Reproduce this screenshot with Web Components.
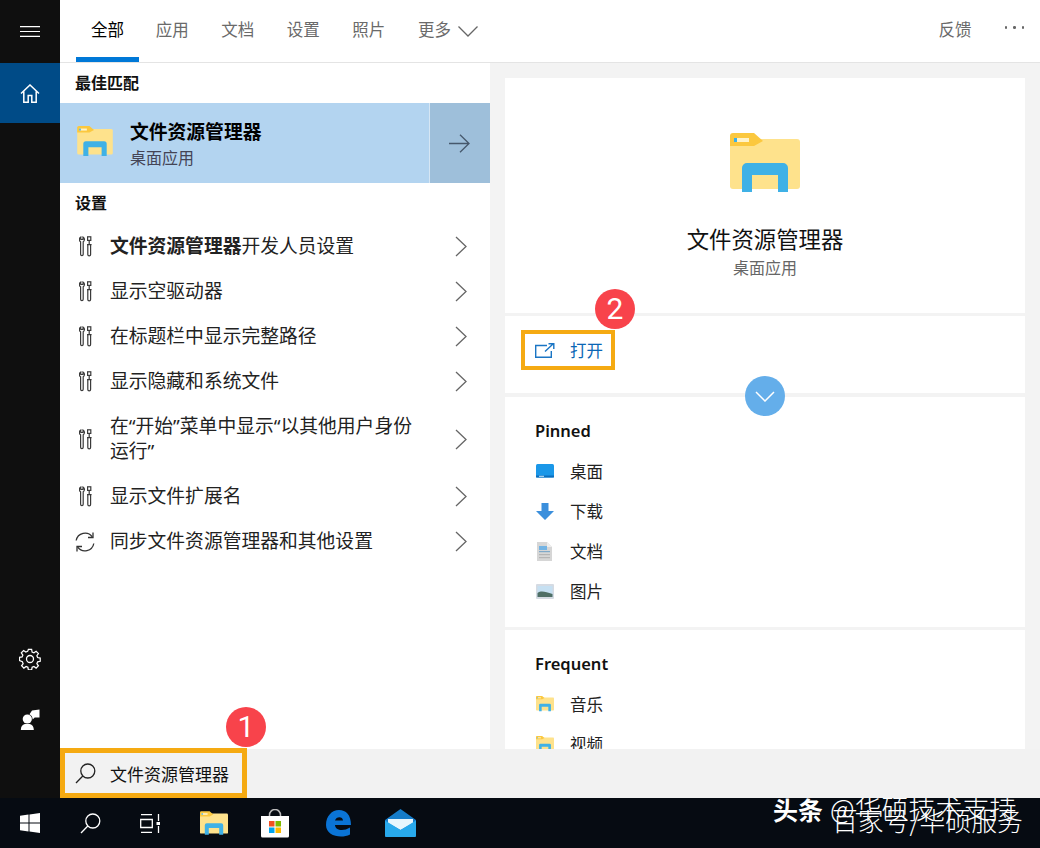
<!DOCTYPE html>
<html lang="zh">
<head>
<meta charset="utf-8">
<title>Search</title>
<style>
  html, body { margin: 0; height: 100%; overflow: hidden; background: #f3f3f3; }
  body { font-family: "Noto Sans", "Noto Sans CJK SC", sans-serif; }
</style>
</head>
<body>
<search-app></search-app>

<script>
// icon strings, shared by the elements below
const folder = (w, h) => `<svg width="${w}" height="${h}" viewBox="0 0 70 59" style="display:block">
  <rect x="0" y="6" width="70" height="50" rx="3" fill="#fee28c"/>
  <path d="M0 3a3 3 0 0 1 3-3h21l9 8-9 5H0z" fill="#fbc83f"/>
  <rect x="4" y="5" width="15" height="4" fill="#fff3c9"/><rect x="4" y="5" width="3" height="4" fill="#3cb0e8"/>
  <path d="M12 59V35a5 5 0 0 1 5-5h36a5 5 0 0 1 5 5v24H48V42H22v17z" fill="#3fb1e6"/>
</svg>`;

const wrench = `<svg width="13" height="21" viewBox="0 0 13 21" fill="none" stroke="#3a3a3a" stroke-width="1.200">
  <path d="M1.800 1v2.500h2.200V1c1 .5 1.600 1.500 1.400 2.800-.1.900-.6 1.600-1.200 2v12.500a1.300 1.300 0 0 1-2.600 0V5.800C1 5.400.5 4.700.4 3.800.3 2.600.8 1.500 1.800 1z"/>
  <rect x="8.600" y=".8" width="3.200" height="3.600"/>
  <path d="M10.200 4.400v4.200M8 8.600h4.600M8.800 8.600v9.900a1.400 1.400 0 0 0 2.800 0V8.600"/>
</svg>`;

const sync = `<svg width="22" height="22" viewBox="0 0 22 22" fill="none" stroke="#333" stroke-width="1.300">
  <path d="M2.200 9.500A9 9 0 0 1 18.300 5.800M19.800 12.500A9 9 0 0 1 3.700 16.200"/>
  <path d="M19 1.500v5h-5M3 20.500v-5h5"/>
</svg>`;

const chevronRight = `<svg width="12" height="21" viewBox="0 0 12 21" fill="none" stroke="#666" stroke-width="1.300"><path d="M1 1 11 10.500 1 20"/></svg>`;

const pinnedIcons = {
  desktop: `<svg width="18" height="15" viewBox="0 0 18 15"><rect width="18" height="13.500" rx="1.500" fill="#1a97e8"/><rect y="11.500" width="18" height="2" fill="#0c6fbd"/><rect x="3" y="11.800" width="5" height="1" fill="#cde7f8"/></svg>`,
  download: `<svg width="18" height="17" viewBox="0 0 18 17"><path d="M5.500 0h7v8H18l-9 9-9-9h5.500z" fill="#3b8fdc"/></svg>`,
  doc: `<svg width="17" height="19" viewBox="0 0 17 19"><path d="M1 0h10l5 5v14H1z" fill="#d6d6d6"/><path d="M11 0l5 5h-5z" fill="#eee"/><rect x="3" y="4" width="8" height="4" fill="#74b4e4"/><rect x="3" y="9" width="11" height="1.200" fill="#7fa9c9"/><rect x="3" y="12" width="11" height="1.200" fill="#b5b5b5"/><rect x="3" y="15" width="11" height="1.200" fill="#b5b5b5"/></svg>`,
  pictures: `<svg width="18" height="15" viewBox="0 0 18 15"><rect width="18" height="15" rx="1" fill="#d5dbe3"/><rect x="1.500" y="2" width="15" height="11" fill="#c6e0f2"/><path d="M1.500 9c4-3 8-1 15 1v3h-15z" fill="#4f6f66"/></svg>`,
  folder: folder(18, 15.200)
};

class SearchRail extends HTMLElement {
  constructor() {
    super();
    this.attachShadow({ mode: 'open' });
    this.shadowRoot.innerHTML = `
      <style>
        :host { display: flex; flex-direction: column; width: 60px; background: #0f0f0f; }
        .item { height: 60px; display: flex; align-items: center; justify-content: center; }
        .burger { height: 63px; }
        .home { background: #004b87; }
        .spacer { flex: 1; }
        .end { height: 49px; }
        svg { display: block; }
      </style>
      <div class="item burger"><svg width="20" height="11" viewBox="0 0 20 11" stroke="#fff" stroke-width="1.100"><path d="M0 .6h20M0 5.500h20M0 10.400h20"/></svg></div>
      <div class="item home"><svg width="20" height="19" viewBox="0 0 20 19" fill="none" stroke="#fff" stroke-width="1.500"><path d="M1 9.500 10 1l9 8.500M3.800 7.500v10.700h4.400v-6.700h3.600v6.700h4.400V7.500"/></svg></div>
      <div class="spacer"></div>
      <div class="item"><svg width="22" height="22" viewBox="0 0 22 22" fill="none" stroke="#fff" stroke-width="1.300"><circle cx="11" cy="11" r="3.500"/><path d="M9.300 1h3.400l.5 2.700 1.900.8 2.300-1.600 2.400 2.400-1.600 2.300.8 1.900 2.700.5v3.400l-2.700.5-.8 1.900 1.600 2.300-2.400 2.400-2.300-1.600-1.900.8-.5 2.700H9.300l-.5-2.700-1.900-.8-2.300 1.600-2.400-2.400 1.600-2.300-.8-1.900L0 12.700V9.300l2.700-.5.8-1.900-1.600-2.300 2.400-2.400 2.300 1.600 1.900-.8z" transform="translate(.5 .5) scale(.955)"/></svg></div>
      <div class="item"><svg width="20" height="21" viewBox="0 0 20 21" fill="#fff"><circle cx="7.300" cy="10" r="4.600"/><path d="M.8 21c0-3.500 1.500-5.500 4-6h5c2.500.5 4 2.500 4 6z"/><path d="M12 1.500 19.500.5v8h-4.800l-2 2c-.2-2.500-1.200-4-3.200-5.200z"/></svg></div>
      <div class="end"></div>`;
  }
}

class SearchTabs extends HTMLElement {
  constructor() {
    super();
    this.attachShadow({ mode: 'open' });
    this.shadowRoot.innerHTML = `
      <style>
        :host { display: flex; align-items: stretch; height: 63px; box-sizing: border-box; background: #fff; border-bottom: 1px solid #e4e4e4; padding-left: 16px; font-size: 16.500px; color: #6a6a6a; }
        .tab { box-sizing: border-box; height: 62px; width: 65.500px; padding-top: 18px; line-height: 24px; text-align: center; flex: none; }
        .tab.on { color: #000; width: 63px; margin-right: .5px; border-bottom: 5px solid #0078d7; }
        .more { display: flex; gap: 7px; height: 62px; padding: 18px 0 0 16.500px; box-sizing: border-box; line-height: 24px; width: 110px; }
        .more svg { margin-top: 8px; }
        .space { flex: 1; }
        .feedback { padding-top: 18px; line-height: 24px; }
        .dots { margin: 26px 16px 0 33px; display: flex; gap: 6px; height: 3px; }
        .dots i { width: 2.500px; height: 2.500px; background: #666; border-radius: 50%; }
      </style>
      <div class="tab on">全部</div>
      <div class="tab">应用</div>
      <div class="tab">文档</div>
      <div class="tab">设置</div>
      <div class="tab">照片</div>
      <div class="more">更多<svg width="20" height="11" viewBox="0 0 20 11" fill="none" stroke="#666" stroke-width="1.300"><path d="M.5.500 10 10 19.500.500"/></svg></div>
      <div class="space"></div>
      <div class="feedback">反馈</div>
      <div class="dots"><i></i><i></i><i></i></div>`;
  }
}

class BestMatch extends HTMLElement {
  constructor() {
    super();
    this.attachShadow({ mode: 'open' });
    this.shadowRoot.innerHTML = `
      <style>
        :host { display: flex; height: 80px; background: #b3d4f0; }
        .icon { width: 70px; padding: 23px 0 0 17px; box-sizing: border-box; }
        .text { flex: 1; }
        .title { font-size: 18.800px; font-weight: 700; line-height: 26px; margin-top: 16px; color: #000; }
        .sub { font-size: 16px; line-height: 24px; margin-top: 1px; color: #445; }
        .go { width: 61px; border-left: 1.500px solid #d6e6f4; box-sizing: border-box; background: #9ebfda; display: flex; align-items: center; justify-content: center; padding-right: 2px; }
      </style>
      <div class="icon">${folder(36, 30)}</div>
      <div class="text"><div class="title"><slot name="title"></slot></div><div class="sub"><slot name="sub"></slot></div></div>
      <div class="go"><svg width="21" height="19" viewBox="0 0 21 19" fill="none" stroke="#46586c" stroke-width="1.300"><path d="M0 9.500h20M11 .8l9 8.700-9 8.700"/></svg></div>`;
  }
}

class SettingRow extends HTMLElement {
  constructor() {
    super();
    this.attachShadow({ mode: 'open' });
    this.shadowRoot.innerHTML = `
      <style>
        :host { display: flex; align-items: center; min-height: 45px; padding: 10px 0; box-sizing: border-box; font-size: 18.800px; line-height: 25px; color: #222; }
        .icon { width: 50px; display: flex; justify-content: center; flex: none; }
        .icon svg { display: block; }
        .text { width: 315px; flex: none; }
        .arrow { margin-left: 30px; }
        .arrow svg { display: block; }
      </style>
      <div class="icon">${this.getAttribute('icon') === 'sync' ? sync : wrench}</div>
      <div class="text"><slot></slot></div>
      <div class="arrow">${chevronRight}</div>`;
  }
}

class PinnedItem extends HTMLElement {
  constructor() {
    super();
    this.attachShadow({ mode: 'open' });
    this.shadowRoot.innerHTML = `
      <style>
        :host { display: flex; align-items: center; height: 40px; font-size: 16.500px; color: #222; padding-left: 31px; }
        .icon { width: 34px; flex: none; }
        .icon svg { display: block; }
      </style>
      <div class="icon">${pinnedIcons[this.getAttribute('icon')]}</div>
      <div><slot></slot></div>`;
  }
}

class DetailPane extends HTMLElement {
  constructor() {
    super();
    this.attachShadow({ mode: 'open' });
    this.shadowRoot.innerHTML = `
      <style>
        :host { display: flex; flex-direction: column; width: 520px; margin: 15px 15px 0 15px; overflow: hidden; }
        .card { background: #fff; flex: none; }
        .head { height: 235px; display: flex; flex-direction: column; align-items: center; padding-top: 55px; box-sizing: border-box; }
        .name { font-size: 22.400px; line-height: 32px; margin-top: 32px; color: #111; }
        .kind { font-size: 16px; line-height: 24px; margin-top: 0; color: #666; }
        .open { height: 77px; margin-top: 3px; padding: 14px 0 0 16px; box-sizing: border-box; }
        .btn { display: flex; align-items: center; width: 94px; height: 40px; box-sizing: border-box; border: 4.500px solid #f5aa12; padding-left: 10px; color: #0a66b5; font-size: 16.500px; gap: 15px; }
        .btn svg { display: block; }
        .list { height: 230px; margin-top: 4px; }
        .freq { flex: 1; margin-top: 3px; }
        h3 { margin: 0; font-size: 16.500px; font-weight: 600; line-height: 24px; color: #111; padding: 22px 0 8px 30px; }
        .toggle { position: absolute; left: 685px; top: 313px; width: 40px; height: 40px; border-radius: 50%; background: #64aeea; display: flex; align-items: center; justify-content: center; }
      </style>
      <div class="card head">
        ${folder(70, 59)}
        <div class="name">文件资源管理器</div>
        <div class="kind">桌面应用</div>
      </div>
      <div class="card open">
        <div class="btn">
          <svg width="20" height="15" viewBox="0 0 20 15" fill="none" stroke="#1a75c4" stroke-width="1.400"><path d="M12 2.500H.7v11.800h15.600V8"/><path d="M10 8.500 18 1M13.500.7h5.300V6"/></svg>
          <span>打开</span>
        </div>
      </div>
      <div class="toggle"><svg width="20" height="11" viewBox="0 0 20 11" fill="none" stroke="#fff" stroke-width="1.500"><path d="M1 1l9 9 9-9"/></svg></div>
      <div class="card list">
        <h3>Pinned</h3>
        <pinned-item icon="desktop">桌面</pinned-item>
        <pinned-item icon="download">下载</pinned-item>
        <pinned-item icon="doc">文档</pinned-item>
        <pinned-item icon="pictures">图片</pinned-item>
      </div>
      <div class="card freq">
        <h3>Frequent</h3>
        <pinned-item icon="folder">音乐</pinned-item>
        <pinned-item icon="folder">视频</pinned-item>
      </div>`;
  }
}

class SearchBox extends HTMLElement {
  constructor() {
    super();
    this.attachShadow({ mode: 'open' });
    this.shadowRoot.innerHTML = `
      <style>
        :host { display: block; height: 49px; background: #f2f2f2; }
        .field { display: flex; align-items: center; width: 187px; height: 50px; margin-top: -1px; position: relative; box-sizing: border-box; border: 5px solid #f5aa12; padding-left: 10px; gap: 14px; font-size: 17px; color: #111; }
        svg { display: block; }
      </style>
      <div class="field">
        <svg width="21" height="21" viewBox="0 0 21 21" fill="none" stroke="#222" stroke-width="1.300"><circle cx="12.800" cy="8" r="7"/><path d="M7.800 13 1 20"/></svg>
        <span><slot></slot></span>
      </div>`;
  }
}

class NoteBadge extends HTMLElement {
  constructor() {
    super();
    this.attachShadow({ mode: 'open' });
    this.shadowRoot.innerHTML = `
      <style>
        :host { position: absolute; width: 40px; height: 40px; border-radius: 50%; background: #f8434b; color: #fff; display: flex; align-items: center; justify-content: center; font: 400 30px/40px Roboto, sans-serif; }
      </style>
      <slot></slot>`;
  }
}

class TaskBar extends HTMLElement {
  constructor() {
    super();
    this.attachShadow({ mode: 'open' });
    const cell = (w, svg) => `<div class="cell" style="width:${w}px">${svg}</div>`;
    this.shadowRoot.innerHTML = `
      <style>
        :host { display: flex; height: 50px; background: #060b12; position: relative; overflow: hidden; }
        .cell { height: 50px; display: flex; align-items: center; justify-content: center; flex: none; }
        svg { display: block; }
        .mark { position: absolute; color: #fff; white-space: nowrap; font-family: "Noto Sans CJK SC", sans-serif; line-height: 30px; }
        .brand { left: 773px; top: -4px; font-size: 25px; font-weight: 700; }
        .handle { left: 830px; top: -5px; font-size: 27px; font-weight: 300; }
        .under { left: 832px; top: 7px; font-size: 25.800px; font-weight: 300; }
      </style>
      ${cell(60, `<svg width="20" height="20" viewBox="0 0 20 20" fill="#fff"><path d="M0 2.800 8.500 1.600v8H0zM9.500 1.400 20 0v9.600H9.500zM0 10.500h8.500v8L0 17.200zM9.500 10.500H20V20L9.500 18.600z"/></svg>`)}
      ${cell(60, `<svg width="21" height="21" viewBox="0 0 21 21" fill="none" stroke="#fff" stroke-width="1.300"><circle cx="12.800" cy="8" r="7"/><path d="M7.800 13 1 20"/></svg>`)}
      ${cell(60, `<svg width="20" height="19" viewBox="0 0 20 19" fill="none" stroke="#fff" stroke-width="1.300"><path d="M1 .7h11M1 18.300h11M.7 5.500h11.600v8H.7z"/><path d="M18.500 0v7M18.500 12v7"/><rect x="16.500" y="8" width="3.500" height="3" fill="#fff" stroke="none"/></svg>`)}
      ${cell(68, folder(28, 24))}
      ${cell(54, `<svg width="30" height="29" viewBox="0 0 30 29"><path d="M9.500 9V6a5.500 5.500 0 0 1 11 0v3" fill="none" stroke="#bbb" stroke-width="1.500"/><path d="M1 7h28v20a1.500 1.500 0 0 1-1.500 1.500h-25A1.500 1.500 0 0 1 1 27z" fill="#fff"/><rect x="9" y="12" width="5.500" height="5.500" fill="#f25022"/><rect x="15.500" y="12" width="5.500" height="5.500" fill="#7fba00"/><rect x="9" y="18.500" width="5.500" height="5.500" fill="#00a4ef"/><rect x="15.500" y="18.500" width="5.500" height="5.500" fill="#ffb900"/></svg>`)}
      ${cell(72, `<svg width="25" height="27" viewBox="0 0 25 27"><path fill-rule="evenodd" d="M0 15C0 6 6 0 13 0c7 0 12 5 12 15H9c0 5 8 7 15 2.500v7C15 29 0 26 0 15zM9 10.500h8c0-4.500-7-4.500-8 0z" fill="#0a74d6"/></svg>`)}
      ${cell(52, `<svg width="31" height="28" viewBox="0 0 31 28"><path d="M15.500 0 31 11v15.500a1.500 1.500 0 0 1-1.500 1.500h-28A1.500 1.500 0 0 1 0 26.500V11z" fill="#157cc9"/><path d="M3 10h25v4l-12.500 7L3 14z" fill="#e8f6fd"/><path d="M0 11.500 15.500 21 31 11.500v15a1.500 1.500 0 0 1-1.500 1.500h-28A1.500 1.500 0 0 1 0 26.500z" fill="#28a9ec"/></svg>`)}
      <div class="mark brand">头条</div>
      <div class="mark handle">@华硕技术支持</div>
      <div class="mark under">百家号/华硕服务</div>`;
  }
}

class SearchApp extends HTMLElement {
  constructor() {
    super();
    this.attachShadow({ mode: 'open' });
    this.shadowRoot.innerHTML = `
      <style>
        :host { display: grid; grid-template-columns: 60px 980px; grid-template-rows: 798px 50px; width: 1040px; height: 848px; position: relative; background: #f3f3f3; overflow: hidden; }
        task-bar { grid-column: 1 / 3; }
        .main { display: flex; flex-direction: column; min-height: 0; }
        .middle { flex: 1; display: flex; min-height: 0; position: relative; }
        .results { width: 430px; background: #fff; flex: none; }
        h2 { margin: 0; font-size: 16px; font-weight: 700; line-height: 24px; color: #111; padding: 8px 0 8px 15px; }
        h2.second { padding: 8px 0 9px 15px; }
        .b1 { left: 226px; top: 707px; }
        .b2 { left: 595px; top: 289px; }
        b { font-weight: 700; }
      </style>
      <search-rail></search-rail>
      <div class="main">
        <search-tabs></search-tabs>
        <div class="middle">
          <div class="results">
            <h2>最佳匹配</h2>
            <best-match><span slot="title">文件资源管理器</span><span slot="sub">桌面应用</span></best-match>
            <h2 class="second">设置</h2>
            <setting-row><b>文件资源管理器</b>开发人员设置</setting-row>
            <setting-row>显示空驱动器</setting-row>
            <setting-row>在标题栏中显示完整路径</setting-row>
            <setting-row>显示隐藏和系统文件</setting-row>
            <setting-row>在“开始”菜单中显示“以其他用户身份运行”</setting-row>
            <setting-row>显示文件扩展名</setting-row>
            <setting-row icon="sync">同步文件资源管理器和其他设置</setting-row>
          </div>
          <detail-pane></detail-pane>
        </div>
        <search-box>文件资源管理器</search-box>
      </div>
      <task-bar></task-bar>
      <note-badge class="b1">1</note-badge>
      <note-badge class="b2">2</note-badge>`;
  }
}

customElements.define('search-rail', SearchRail);
customElements.define('search-tabs', SearchTabs);
customElements.define('best-match', BestMatch);
customElements.define('setting-row', SettingRow);
customElements.define('pinned-item', PinnedItem);
customElements.define('detail-pane', DetailPane);
customElements.define('search-box', SearchBox);
customElements.define('note-badge', NoteBadge);
customElements.define('task-bar', TaskBar);
customElements.define('search-app', SearchApp);
</script>
</body>
</html>
